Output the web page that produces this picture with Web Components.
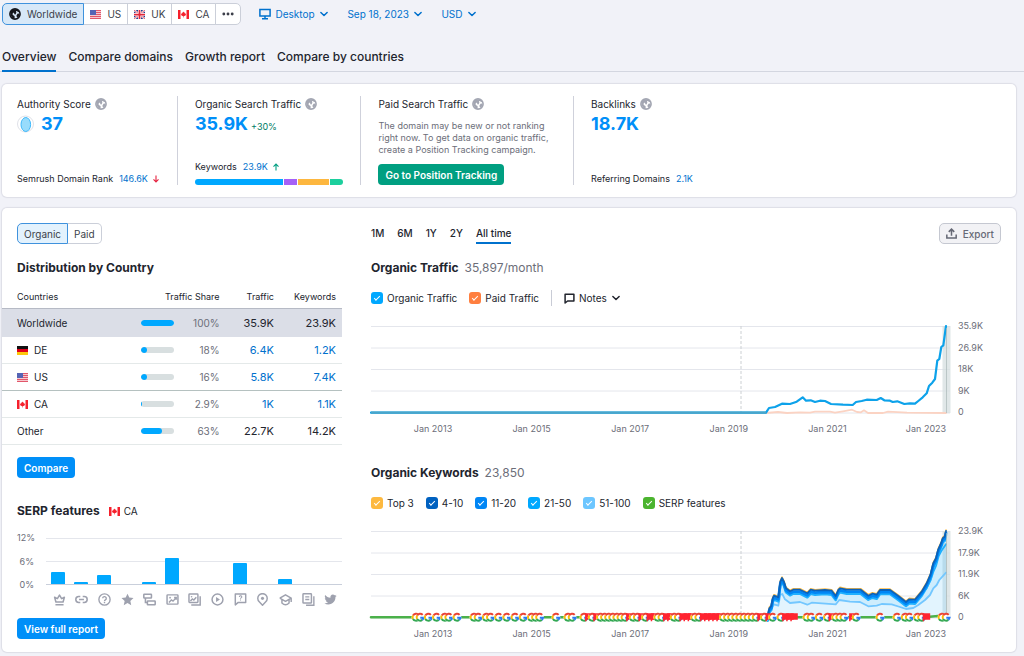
<!DOCTYPE html>
<html lang="en">
<head>
<meta charset="utf-8">
<meta name="viewport" content="width=device-width, initial-scale=1">
<title>Domain Overview</title>
<style>
    body {
        margin: 0;
        padding: 3px 8px 4px 2px;
        background-color: #f1f2f8;
        color: #22252e;
        font-family: Inter, "Liberation Sans", sans-serif;
        font-size: 10px;
        line-height: 16px;
        --blue: #0071cd;
        --muted: #6c6e79;
        --line: #e4e6ec;
    }
</style>
</head>
<body>
<report-toolbar></report-toolbar>
<report-tabs></report-tabs>

<summary-panel>
    <metric-card title="Authority Score">
        <authority-score slot="value">37</authority-score>
        <stat-line slot="footer" label="Semrush Domain Rank" value="146.6K" trend="down"></stat-line>
    </metric-card>
    <metric-card title="Organic Search Traffic">
        <big-value slot="value" delta="+30%">35.9K</big-value>
        <stat-line slot="footer" label="Keywords" value="23.9K" trend="up"></stat-line>
        <share-bar slot="footer"></share-bar>
    </metric-card>
    <metric-card title="Paid Search Traffic">
        <hint-text slot="value">The domain may be new or not ranking right now. To get data on organic traffic, create a Position Tracking campaign.</hint-text>
        <action-button slot="footer" color="#009f81">Go to Position Tracking</action-button>
    </metric-card>
    <metric-card title="Backlinks">
        <big-value slot="value">18.7K</big-value>
        <stat-line slot="footer" label="Referring Domains" value="2.1K"></stat-line>
    </metric-card>
</summary-panel>

<report-panel>
    <country-report slot="left"></country-report>
    <serp-features slot="left"></serp-features>
    <range-bar slot="right"></range-bar>
    <trend-chart slot="right" kind="traffic" title="Organic Traffic" total="35,897/month">
        <legend-toggle color="#00a8ff">Organic Traffic</legend-toggle>
        <legend-toggle color="#ff7f3f">Paid Traffic</legend-toggle>
        <notes-menu></notes-menu>
    </trend-chart>
    <trend-chart slot="right" kind="keywords" title="Organic Keywords" total="23,850">
        <legend-toggle color="#fdb940">Top 3</legend-toggle>
        <legend-toggle color="#0061c0">4-10</legend-toggle>
        <legend-toggle color="#0086f5">11-20</legend-toggle>
        <legend-toggle color="#00a8ff">21-50</legend-toggle>
        <legend-toggle color="#6cc6ff">51-100</legend-toggle>
        <legend-toggle color="#4bb42f">SERP features</legend-toggle>
    </trend-chart>
</report-panel>

<script>
const ICONS = {
    globe: '<circle cx="8" cy="8" r="6.8" fill="none" stroke="currentColor" stroke-width="2.1"/><path fill="currentColor" d="M2 5 5 1.800l6-.3L14 5l-2.200.2-1-1.200-1.600.4.6 1.800-1.200 2.600-1.400-.4L6.600 6 4.800 7.200 5 9.200l2.400 1.600.2 3.400L4 13 1.800 9zM10 9.600l1.800-2.400 2.600.4-.8 3.400-2.400 2-1-1.200z"/>',
    monitor: '<path fill="none" stroke="currentColor" stroke-width="2" d="M1.2 2h13.6v8.6H1.2zM8 10.6V14M4 14.4h8"/>',
    chevron: '<path fill="none" stroke="currentColor" stroke-width="2.4" stroke-linecap="round" stroke-linejoin="round" d="m3 5.5 5 5 5-5"/>',
    dots: '<g fill="currentColor"><circle cx="2.4" cy="8" r="1.9"/><circle cx="8" cy="8" r="1.9"/><circle cx="13.6" cy="8" r="1.9"/></g>',
    up: '<path fill="none" stroke="currentColor" stroke-width="2.2" d="M8 15V2.5M3 7.2l5-5 5 5"/>',
    down: '<path fill="none" stroke="currentColor" stroke-width="2.2" d="M8 1v12.5M3 8.8l5 5 5-5"/>',
    note: '<path fill="none" stroke="currentColor" stroke-width="2.2" stroke-linejoin="round" d="M1.6 1.8h12.8v9.8H5.2l-3.6 3z"/>',
    export: '<path fill="none" stroke="currentColor" stroke-width="2.2" d="M1.2 9.6v4.8h13.6V9.6M8 11.4V2M4 5.6l4-4 4 4"/>',
    crown: '<path fill="none" stroke="currentColor" stroke-width="1.9" stroke-linejoin="round" d="M3.6 11 2 5.2l3.4 1.7L8 2.6l2.6 4.3L14 5.2 12.4 11zM3 14.4h10"/>',
    link: '<path fill="none" stroke="currentColor" stroke-width="1.9" d="M6.5 4.4H4.6a3.6 3.6 0 0 0 0 7.2h1.9M9.5 4.4h1.9a3.6 3.6 0 0 1 0 7.2H9.5M5 8h6"/>',
    question: '<circle cx="8" cy="8" r="6.9" fill="none" stroke="currentColor" stroke-width="1.7"/><path fill="none" stroke="currentColor" stroke-width="1.7" d="M5.8 6.6a2.2 2.1 0 1 1 3.3 1.8c-.8.5-1.1.7-1.1 1.6M8 11v1.6"/>',
    star: '<path fill="currentColor" d="m8 .8 2.2 4.8 5.2.6-3.9 3.5 1.1 5.3L8 12.4 3.4 15l1.1-5.3L.6 6.2l5.2-.6z"/>',
    sitelinks: '<g fill="none" stroke="currentColor" stroke-width="1.9"><rect x="1" y="1.6" width="9.4" height="4.6" rx=".6"/><rect x="5.4" y="9.8" width="9.6" height="4.6" rx=".6"/><path d="M3 6.2v5.6h2.4"/></g>',
    image: '<rect x="1.3" y="2.3" width="13.4" height="11.4" rx=".8" fill="none" stroke="currentColor" stroke-width="1.8"/><path fill="none" stroke="currentColor" stroke-width="1.7" d="m3.6 11.6 3-3 2 1.4 3.8-4.2M10 5.6h2.6v2.6"/><circle cx="5" cy="5.8" r="1.1" fill="currentColor"/>',
    images: '<rect x="1.2" y="1.3" width="11" height="10.4" rx=".8" fill="none" stroke="currentColor" stroke-width="1.8"/><path fill="none" stroke="currentColor" stroke-width="1.8" d="M15 4v10.8H4M3 9.8l2.4-2.4 1.8 1.2 3-3.4"/><circle cx="4.4" cy="4.6" r="1" fill="currentColor"/>',
    video: '<circle cx="8" cy="8" r="6.7" fill="none" stroke="currentColor" stroke-width="1.8"/><path fill="currentColor" d="M6.2 4.8 11 8l-4.8 3.2z"/>',
    faq: '<path fill="none" stroke="currentColor" stroke-width="1.8" stroke-linejoin="round" d="M1.6 1.2h12.8v10.4H5.2l-3.6 3z"/><path fill="none" stroke="currentColor" stroke-width="1.3" d="M6.6 4.8a1.5 1.4 0 1 1 2.2 1.2c-.6.4-.8.5-.8 1.1M8 8v1.3"/>',
    pin: '<path fill="none" stroke="currentColor" stroke-width="1.8" stroke-linejoin="round" d="M8 15 4 10.8a5.8 5.8 0 1 1 8 0z"/><circle cx="8" cy="6.6" r="1.9" fill="currentColor"/>',
    scholar: '<path fill="none" stroke="currentColor" stroke-width="1.8" stroke-linejoin="round" d="m1 6.4 7-4.2 7 4.2v4.8M15 6.4 8 10.2 1 6.4M3.6 8v4.2c2.6 2.6 6.2 2.6 8.8 0V8"/>',
    news: '<rect x="1.2" y="1" width="10.4" height="11.4" rx=".8" fill="none" stroke="currentColor" stroke-width="1.8"/><path fill="none" stroke="currentColor" stroke-width="1.7" d="M4 4.8h5M4 8h5M14.6 4v11H5"/>',
    bird: '<path fill="currentColor" d="M15.6 3.4c-.6.3-1.1.4-1.8.5.6-.4 1.1-1 1.3-1.7-.6.4-1.2.6-1.9.7a3.1 3.1 0 0 0-5.3 2.8C5.3 5.6 3 4.4 1.4 2.4c-.8 1.5-.4 3.2 1 4.2-.5 0-1-.2-1.4-.4 0 1.500 1.100 2.800 2.500 3.100-.5.1-.9.1-1.400 0 .4 1.200 1.500 2.100 2.900 2.200A6.400 6.400 0 0 1 .4 12.800a9 9 0 0 0 4.800 1.400c5.900 0 9.100-5 8.900-9.300.6-.4 1.100-.9 1.500-1.500z"/>'
};

const FLAGS = {
    us: '<path fill="#f6c9cf" d="M0 0h22v18H0z"/><path stroke="#e2566a" stroke-width="2" d="M0 1h22M0 5h22M0 9h22M0 13h22M0 17h22"/><path fill="#5564b4" d="M0 0h12v10H0z"/>',
    uk: '<path fill="#26408f" d="M0 0h22v18H0z"/><path stroke="#fff" stroke-width="4" d="m0 0 22 18M22 0 0 18"/><path stroke="#e0283c" stroke-width="1.5" d="m0 0 22 18M22 0 0 18"/><path stroke="#fff" stroke-width="6" d="M11 0v18M0 9h22"/><path stroke="#e0283c" stroke-width="3.5" d="M11 0v18M0 9h22"/>',
    ca: '<path fill="#fff" d="M0 0h22v18H0z"/><path fill="#f5202c" d="M0 0h5v18H0zM17 0h5v18h-5zM11 3l1.5 2.5 1.5-.5-.3 2.6L16 7l-.5 2 .6.8L13 12.200l-1.500.2V15h-1v-2.600L9 12.200 5.900 9.800l.6-.8L6 7l2.300.6L8 5l1.500.5z"/>',
    de: '<path fill="#111" d="M0 0h22v6H0z"/><path fill="#e2001a" d="M0 6h22v6H0z"/><path fill="#fdc70c" d="M0 12h22v6H0z"/>'
};

class UiIcon extends HTMLElement {
    connectedCallback() {
        const size = this.getAttribute("size") || 11;
        this.attachShadow({mode: "open"}).innerHTML = `
          <style>
            :host { display: inline-flex; flex: none; }
            svg { display: block; }
          </style>
          <svg width="${size}" height="${size}" viewBox="0 0 16 16" aria-hidden="true">${ICONS[this.getAttribute("name")]}</svg>`;
    }
}

class FlagIcon extends HTMLElement {
    connectedCallback() {
        this.attachShadow({mode: "open"}).innerHTML = `
          <style>
            :host { display: inline-flex; flex: none; }
            svg { display: block; }
          </style>
          <svg width="11" height="9" viewBox="0 0 22 18" aria-hidden="true">${FLAGS[this.getAttribute("code")]}</svg>`;
    }
}

class ReportToolbar extends HTMLElement {
    connectedCallback() {
        this.attachShadow({mode: "open"}).innerHTML = `
          <style>
            :host {
              display: flex;
              align-items: center;
              gap: 18px;
            }
            .regions {
              display: flex;
            }
            button {
              display: flex;
              align-items: center;
              gap: 6px;
              height: 22px;
              margin: 0 0 0 -1px;
              padding: 0 6px;
              font: inherit;
              color: #3c3f4a;
              background-color: #fff;
              border: 1px solid #cbcfd9;
              cursor: pointer;
            }
            button:first-child {
              margin-left: 0;
              border-radius: 5px 0 0 5px;
            }
            button:last-child {
              border-radius: 0 5px 5px 0;
            }
            button[aria-pressed="true"] {
              position: relative;
              background-color: #d7e8f8;
              border-color: #3f92dd;
            }
            button[aria-pressed="true"] ui-icon {
              color: #14161c;
            }
            label {
              display: flex;
              align-items: center;
              gap: 4px;
              color: var(--blue);
            }
            select {
              appearance: none;
              margin: 0;
              padding: 0;
              border: 0;
              background: none;
              font: inherit;
              color: inherit;
              cursor: pointer;
            }
          </style>
          <div class="regions">
            <button aria-pressed="true"><ui-icon name="globe" size="12"></ui-icon>Worldwide</button>
            <button aria-pressed="false"><flag-icon code="us"></flag-icon>US</button>
            <button aria-pressed="false"><flag-icon code="uk"></flag-icon>UK</button>
            <button aria-pressed="false"><flag-icon code="ca"></flag-icon>CA</button>
            <button aria-pressed="false" aria-label="More regions"><ui-icon name="dots" size="12"></ui-icon></button>
          </div>
          <label><ui-icon name="monitor" size="12"></ui-icon><select aria-label="Device"><option>Desktop</option></select><ui-icon name="chevron" size="10"></ui-icon></label>
          <label><select aria-label="Date"><option>Sep 18, 2023</option></select><ui-icon name="chevron" size="10"></ui-icon></label>
          <label><select aria-label="Currency"><option>USD</option></select><ui-icon name="chevron" size="10"></ui-icon></label>`;
    }
}

class ReportTabs extends HTMLElement {
    connectedCallback() {
        this.attachShadow({mode: "open"}).innerHTML = `
          <style>
            :host {
              display: block;
              margin: 20px -8px 12px -2px;
              padding-left: 2px;
              border-bottom: 1px solid #d3d6e0;
            }
            nav {
              display: flex;
              gap: 12px;
            }
            a {
              height: 25px;
              margin-bottom: -1px;
              border-bottom: 2px solid transparent;
              font-size: 12px;
              line-height: 24px;
              font-weight: 500;
              color: #22252e;
              text-decoration: none;
            }
            a[aria-current] {
              border-bottom-color: var(--blue);
            }
          </style>
          <nav>
            <a href="#overview" aria-current="page">Overview</a>
            <a href="#domains">Compare domains</a>
            <a href="#growth">Growth report</a>
            <a href="#countries">Compare by countries</a>
          </nav>`;
    }
}

class SummaryPanel extends HTMLElement {
    connectedCallback() {
        this.attachShadow({mode: "open"}).innerHTML = `
          <style>
            :host {
              display: grid;
              grid-template-columns: 159fr 184fr 213fr 443fr;
              margin-bottom: 11px;
              padding: 12px 0 12px 15px;
              background-color: #fff;
              border-radius: 5px;
              box-shadow: 0 0 1px 1px rgba(25, 27, 60, 0.09);
            }
          </style>
          <slot></slot>`;
    }
}

class MetricCard extends HTMLElement {
    connectedCallback() {
        this.attachShadow({mode: "open"}).innerHTML = `
          <style>
            :host {
              display: flex;
              flex-direction: column;
              min-height: 89px;
              padding: 0 17px;
              border-right: 1px solid #cfd1db;
            }
            :host(:first-child) {
              padding-left: 0;
            }
            :host(:last-child) {
              border-right: 0;
            }
            h3 {
              display: flex;
              align-items: center;
              gap: 4px;
              margin: 0;
              font: inherit;
            }
            ui-icon {
              color: #a3a6b2;
            }
            .footer {
              display: flex;
              flex-direction: column;
              align-items: flex-start;
              gap: 6px;
              margin-top: auto;
            }
          </style>
          <h3>${this.getAttribute("title")}<ui-icon name="globe" size="12"></ui-icon></h3>
          <slot name="value"></slot>
          <div class="footer"><slot name="footer"></slot></div>`;
    }
}

class BigValue extends HTMLElement {
    connectedCallback() {
        this.attachShadow({mode: "open"}).innerHTML = `
          <style>
            :host {
              display: flex;
              align-items: baseline;
              gap: 3px;
              font-size: 18px;
              line-height: 24px;
              font-weight: 700;
              color: #008ff8;
            }
            small {
              font-size: 9px;
              font-weight: 400;
              color: #007c65;
            }
          </style>
          <slot></slot><small>${this.getAttribute("delta") || ""}</small>`;
    }
}

class AuthorityScore extends HTMLElement {
    connectedCallback() {
        this.attachShadow({mode: "open"}).innerHTML = `
          <style>
            :host {
              display: flex;
              align-items: center;
              gap: 6px;
            }
          </style>
          <svg width="18" height="18" viewBox="0 0 18 18" aria-hidden="true">
            <circle cx="8.5" cy="9" r="8" fill="#fff" stroke="#dfe1e8"/>
            <ellipse cx="8.800" cy="9.500" rx="4.800" ry="7" fill="#98dcfc" stroke="#3db8fb"/>
          </svg>
          <big-value><slot></slot></big-value>`;
    }
}

class StatLine extends HTMLElement {
    connectedCallback() {
        const trend = this.getAttribute("trend");
        this.attachShadow({mode: "open"}).innerHTML = `
          <style>
            :host {
              display: flex;
              align-items: center;
              gap: 6px;
              font-size: 9px;
              line-height: 12px;
              white-space: nowrap;
            }
            span {
              display: flex;
              align-items: center;
              gap: 4px;
            }
            a {
              color: var(--blue);
              text-decoration: none;
            }
            .up { color: #009f81; }
            .down { color: #e5213f; }
          </style>
          ${this.getAttribute("label")}
          <span>
            <a href="#details">${this.getAttribute("value")}</a>
            ${trend ? `<ui-icon class="${trend}" name="${trend}" size="8"></ui-icon>` : ""}
          </span>`;
    }
}

class ShareBar extends HTMLElement {
    connectedCallback() {
        this.attachShadow({mode: "open"}).innerHTML = `
          <style>
            :host {
              display: flex;
              align-self: stretch;
              gap: 1px;
              height: 6px;
              overflow: hidden;
              border-radius: 3px;
            }
          </style>
          <i style="flex: 88; background: #00a8ff"></i>
          <i style="flex: 13; background: #a561f7"></i>
          <i style="flex: 31; background: #fdb73f"></i>
          <i style="flex: 13; background: #1ccf9d"></i>`;
    }
}

class HintText extends HTMLElement {
    connectedCallback() {
        this.attachShadow({mode: "open"}).innerHTML = `
          <style>
            :host {
              display: block;
              max-width: 175px;
              margin-top: 8px;
              font-size: 9px;
              line-height: 12px;
              color: var(--muted);
            }
          </style>
          <slot></slot>`;
    }
}

class ActionButton extends HTMLElement {
    connectedCallback() {
        this.attachShadow({mode: "open"}).innerHTML = `
          <style>
            :host { display: inline-flex; }
            button {
              height: 21px;
              padding: 0 7px;
              border: 0;
              border-radius: 4px;
              background-color: ${this.getAttribute("color") || "#008ff8"};
              color: #fff;
              font: inherit;
              font-weight: 600;
              white-space: nowrap;
              cursor: pointer;
            }
          </style>
          <button><slot></slot></button>`;
    }
}

class ReportPanel extends HTMLElement {
    connectedCallback() {
        this.attachShadow({mode: "open"}).innerHTML = `
          <style>
            :host {
              display: grid;
              grid-template-columns: 340fr 630fr;
              gap: 29px;
              padding: 15px 15px 12px 0;
              background-color: #fff;
              border-radius: 5px;
              box-shadow: 0 0 1px 1px rgba(25, 27, 60, 0.09);
            }
            div {
              min-width: 0;
            }
          </style>
          <div><slot name="left"></slot></div>
          <div><slot name="right"></slot></div>`;
    }
}

class CountryReport extends HTMLElement {
    get rows() {
        return [
            {name: "Worldwide", share: 100, label: "100%", traffic: "35.9K", keywords: "23.9K"},
            {name: "DE", flag: "de", share: 18, label: "18%", traffic: "6.4K", keywords: "1.2K"},
            {name: "US", flag: "us", share: 16, label: "16%", traffic: "5.8K", keywords: "7.4K"},
            {name: "CA", flag: "ca", share: 3, label: "2.9%", traffic: "1K", keywords: "1.1K"},
            {name: "Other", share: 63, label: "63%", traffic: "22.7K", keywords: "14.2K"}
        ];
    }

    connectedCallback() {
        this.attachShadow({mode: "open"}).innerHTML = `
          <style>
            :host {
              display: block;
            }
            .switch {
              display: flex;
              margin-left: 15px;
            }
            .switch button {
              height: 21px;
              padding: 0 6px;
              font: inherit;
              color: #3c3f4a;
              background-color: #fff;
              border: 1px solid #cbcfd9;
              border-left: 0;
              border-radius: 0 5px 5px 0;
              cursor: pointer;
            }
            .switch button[aria-pressed="true"] {
              background-color: #e3f2fd;
              border: 1px solid #3f92dd;
              border-radius: 5px 0 0 5px;
            }
            h2 {
              margin: 15px 0 9px 15px;
              font-size: 12px;
              line-height: 18px;
              font-weight: 700;
            }
            table {
              width: 100%;
              border-spacing: 0;
              table-layout: fixed;
              text-align: right;
            }
            th {
              height: 22px;
              padding: 0;
              border-bottom: 1px solid #b6bac5;
              font-size: 9px;
              line-height: 12px;
              font-weight: 400;
            }
            td {
              height: 26px;
              padding: 0;
              border-bottom: 1px solid #e4e9e9;
            }
            .country { width: 41%; padding-left: 15px; text-align: left; box-sizing: border-box; }
            .share { width: 23%; }
            .traffic { width: 16%; }
            .keywords { padding-right: 6px; }
            tr.selected td {
              height: 27px;
              background-color: #dbdee7;
              border-bottom-color: #dbdee7;
            }
            tr.mark td {
              border-bottom-color: #b5c1c0;
            }
            td.traffic, td.keywords {
              font-size: 11px;
            }
            .name, .share-cell {
              display: flex;
              align-items: center;
              gap: 6px;
            }
            .share-cell {
              justify-content: space-between;
              color: var(--muted);
            }
            .bar {
              width: 33px;
              height: 6px;
              overflow: hidden;
              border-radius: 3px;
              background-color: #d8dfe0;
            }
            .bar i {
              display: block;
              height: 6px;
              border-radius: 3px;
              background-color: #00a8ff;
            }
            a {
              color: var(--blue);
              text-decoration: none;
            }
            action-button {
              margin: 12px 0 0 15px;
            }
          </style>
          <div class="switch">
            <button aria-pressed="true">Organic</button>
            <button aria-pressed="false">Paid</button>
          </div>
          <h2>Distribution by Country</h2>
          <table>
            <thead>
              <tr><th class="country">Countries</th><th class="share">Traffic Share</th><th class="traffic">Traffic</th><th class="keywords">Keywords</th></tr>
            </thead>
            <tbody>${this.rows.map(row => this._renderRow(row)).join("")}</tbody>
          </table>
          <action-button>Compare</action-button>`;
    }

    _renderRow(row) {
        const cell = text => row.flag ? `<a href="#${row.flag}">${text}</a>` : text;
        const rowClass = row.name === "Worldwide" ? "selected" : row.name === "US" ? "mark" : "";
        return `
          <tr class="${rowClass}">
            <td class="country"><div class="name">${row.flag ? `<flag-icon code="${row.flag}"></flag-icon>` : ""}${row.name}</div></td>
            <td class="share"><div class="share-cell"><div class="bar"><i style="width: ${row.share}%"></i></div>${row.label}</div></td>
            <td class="traffic">${cell(row.traffic)}</td>
            <td class="keywords">${cell(row.keywords)}</td>
          </tr>`;
    }
}

class SerpFeatures extends HTMLElement {
    get features() {
        // icon name, bar height in pixels
        return [
            ["crown", 12], ["link", 2], ["question", 9], ["star", 0], ["sitelinks", 2],
            ["image", 26], ["images", 0], ["video", 0], ["faq", 21], ["pin", 0],
            ["scholar", 5], ["news", 0], ["bird", 0]
        ];
    }

    connectedCallback() {
        this.attachShadow({mode: "open"}).innerHTML = `
          <style>
            :host {
              display: block;
              padding-left: 15px;
            }
            header {
              display: flex;
              align-items: center;
              gap: 4px;
              margin: 24px 0 18px;
              line-height: 18px;
            }
            h2 {
              margin: 0 5px 0 0;
              font-size: 12px;
              line-height: 18px;
              font-weight: 700;
            }
            .chart {
              display: grid;
              grid-template-columns: 17px 1fr;
              column-gap: 12px;
            }
            .scale {
              display: flex;
              flex-direction: column;
              justify-content: space-between;
              margin: -6px 0;
              font-size: 9px;
              line-height: 12px;
              text-align: right;
              color: var(--muted);
            }
            .bars, .icons {
              display: grid;
              grid-template-columns: repeat(13, 1fr);
            }
            .bars {
              height: 46px;
              align-items: end;
              justify-items: center;
              padding-left: 1px;
              border-bottom: 1px solid #c9cfdb;
              background: linear-gradient(var(--line) 1px, transparent 1px) 0 0 / 100% 23px;
            }
            .bars i {
              width: 14px;
              border-radius: 1px 1px 0 0;
              background-color: #00a8ff;
            }
            .icons {
              grid-column: 2;
              justify-items: center;
              margin: 8px 0 12px;
              padding-left: 2px;
              color: #9ea1ae;
            }
          </style>
          <header><h2>SERP features</h2><flag-icon code="ca"></flag-icon>CA</header>
          <div class="chart">
            <div class="scale"><span>12%</span><span>6%</span><span>0%</span></div>
            <div class="bars">${this.features.map(([, height]) => `<i style="height: ${height}px"></i>`).join("")}</div>
            <div class="icons">${this.features.map(([name]) => `<ui-icon name="${name}" size="13"></ui-icon>`).join("")}</div>
          </div>
          <action-button>View full report</action-button>`;
    }
}

class RangeBar extends HTMLElement {
    connectedCallback() {
        this.attachShadow({mode: "open"}).innerHTML = `
          <style>
            :host {
              display: flex;
              justify-content: space-between;
              height: 21px;
            }
            nav {
              display: flex;
              gap: 13px;
            }
            a {
              box-sizing: border-box;
              height: 21px;
              border-bottom: 2px solid transparent;
              line-height: 20px;
              font-weight: 500;
              color: #22252e;
              text-decoration: none;
            }
            a[aria-current] {
              border-bottom-color: var(--blue);
            }
            button {
              display: flex;
              align-items: center;
              gap: 6px;
              padding: 0 6px;
              font: inherit;
              font-weight: 500;
              color: #666975;
              background-color: #f2f2f5;
              border: 1px solid #c5c8d1;
              border-radius: 5px;
              cursor: pointer;
            }
          </style>
          <nav>
            <a href="#1m">1M</a>
            <a href="#6m">6M</a>
            <a href="#1y">1Y</a>
            <a href="#2y">2Y</a>
            <a href="#all" aria-current="true">All time</a>
          </nav>
          <button><ui-icon name="export" size="11"></ui-icon>Export</button>`;
    }
}

class LegendToggle extends HTMLElement {
    connectedCallback() {
        this.attachShadow({mode: "open"}).innerHTML = `
          <style>
            :host { display: inline-flex; }
            label {
              display: flex;
              align-items: center;
              gap: 4px;
            }
            input {
              appearance: none;
              display: grid;
              place-content: center;
              width: 12px;
              height: 12px;
              margin: 0;
              border-radius: 3px;
              background-color: #c4c7cf;
            }
            input:checked {
              background-color: ${this.getAttribute("color")};
            }
            input:checked::after {
              content: "";
              width: 5px;
              height: 2px;
              margin-bottom: 2px;
              border: solid #fff;
              border-width: 0 0 1px 1px;
              transform: rotate(-45deg);
            }
          </style>
          <label><input type="checkbox" checked><slot></slot></label>`;
    }
}

class NotesMenu extends HTMLElement {
    connectedCallback() {
        this.attachShadow({mode: "open"}).innerHTML = `
          <style>
            :host {
              display: inline-flex;
              padding-left: 12px;
              border-left: 1px solid #c9ccd6;
            }
            button {
              display: flex;
              align-items: center;
              gap: 4px;
              padding: 0;
              border: 0;
              background: none;
              font: inherit;
              color: inherit;
              cursor: pointer;
            }
          </style>
          <button aria-haspopup="menu"><ui-icon name="note" size="11"></ui-icon>Notes<ui-icon name="chevron" size="10"></ui-icon></button>`;
    }
}

const TRAFFIC = "0,92.7 395,92.7 398,88 404,87 411,83.7 419,84 425.7,81.7 431.7,77.3 435,80.7 439.7,80.3 444,82 449,80.7 454,81 460,84 472,84.7 481.7,85 485,82 490.7,81 495.7,79.7 505.7,80 509.7,78 513.3,80.3 519,80.7 521.7,82 526.3,81.3 533.3,84 539,83.3 544,83.7 547.3,81 551.7,77.3 555.7,73.3 558,66 561.3,62.7 564,59 566.3,40.7 568.3,39 570.3,27 572.3,25.3 575,6";
const PAID = "395,93 407,92 416,93 429,92.3 439,92.7 444,91.7 459,91.7 464,92.7 472,91.3 481,89.7 486,92 490,92.3 493,90.3 497,93 512,93 517,91.7 536,92.7 575,93";
const KEYWORDS = "396.7,91.7 398.3,83.3 400.3,81 401.7,73.3 403,70.7 407.3,72.3 409.3,56.7 411,53 413,57 415,63.3 419,66.3 422.3,64.7 429,64.7 436.3,68.3 439.7,64.7 444,65.7 454,65 460.7,65.7 464.7,71 467.3,65 469,63.3 475.7,64.7 489.7,64.7 497.3,70.7 501.3,68.7 505.7,69.7 509,65 519,65 527.3,71 535,77 538.3,74.3 544,74.7 550.7,66.7 555.7,58.3 559.7,49 562.3,38.3 565,33.3 567.3,24.3 570.3,17.7 571.7,13.3 573.7,11.7 575,6";
const TOP_100 = "396.7,91.7 399,86.7 403,79.3 407.3,80.7 409.3,70 411.3,69 414,74.3 419,78 429,77 436.3,79.7 440.7,77.7 464.7,79.3 468.3,75 479,76.7 489,77 497.3,81.3 505.7,80.7 510.7,79 520.7,79.3 529,82 535,84 542.3,83 547.3,80 554,75 559,70 562.3,63.3 565.7,60 568.3,55 575,47.7";
const TOP_50 = "555,64 559.7,55 562.3,47 565,41 567.7,31 570.3,26 575,19.3";

// algorithm updates along the keyword axis: start x and one letter per month
const MARKERS = [
    [45, "GG-G-G-GG-G"], [103, "GG-GG-G-G-G-G-GGG"], [185, "G"], [197, "GG"],
    [213, "GFGFGGGGGGGFGGFGFFGGFFGGFFFGGFFFFFGGGGGGGGGFGFG"],
    [410, "GFFF"], [436, "GG-G-GFGGG-FG"], [509, "G"], [526, "G-GG-GGF"], [571, "GG"]
];

class TrendChart extends HTMLElement {
    connectedCallback() {
        const keywords = this.getAttribute("kind") === "keywords";
        const labels = keywords ? ["23.9K", "17.9K", "11.9K", "6K", "0"] : ["35.9K", "26.9K", "18K", "9K", "0"];
        const years = [2013, 2015, 2017, 2019, 2021, 2023];
        this.attachShadow({mode: "open"}).innerHTML = `
          <style>
            :host {
              display: block;
              margin-top: 15px;
            }
            :host([kind="keywords"]) {
              margin-top: 29px;
            }
            h2 {
              display: flex;
              gap: 6px;
              margin: 0 0 12px;
              font-size: 12px;
              line-height: 18px;
              font-weight: 700;
            }
            h2 span {
              font-weight: 400;
              color: var(--muted);
            }
            .legend {
              display: flex;
              flex-wrap: wrap;
              gap: 12px;
              min-height: 18px;
              align-items: center;
              margin-bottom: 13px;
            }
            svg {
              display: block;
              width: 100%;
              overflow: visible;
            }
            text {
              font-size: 9px;
              fill: var(--muted);
            }
            polyline {
              fill: none;
              stroke-linejoin: round;
              stroke-linecap: round;
            }
          </style>
          <h2>${this.getAttribute("title")} <span>${this.getAttribute("total")}</span></h2>
          <div class="legend"><slot></slot></div>
          <svg viewBox="0 0 630 115" role="img" aria-label="${this.getAttribute("title")}">
            <defs>
              <g id="G">
                <circle r="4.4" fill="#fff"/>
                <g fill="none" stroke-width="2">
                  <path stroke="#ea4335" d="M2.6-2.4A3.5 3.5 0 0 0-3-1.7"/>
                  <path stroke="#fbbc05" d="M-3-1.7A3.5 3.5 0 0 0-3 1.7"/>
                  <path stroke="#34a853" d="M-3 1.7A3.5 3.5 0 0 0 2.2 2.6"/>
                  <path stroke="#2b7bf3" d="M2.2 2.6A3.5 3.5 0 0 0 3.5.4H.2"/>
                </g>
              </g>
              <path id="F" fill="#ff2430" d="M-3-4h7.5v6.5h-6V4H-3z"/>
            </defs>
            <path stroke="#e4e6ec" stroke-width="1" d="M0 6.5h579M0 28h579M0 49.5h579M0 71h579M0 93h579"/>
            <path fill="#d6dfe0" fill-opacity=".75" d="M571.5 6h8v87h-8z"/>
            <path stroke="#ccd0d3" stroke-dasharray="3 2" d="M370 6v87"/>
            ${keywords ? this._keywordLines() : this._trafficLines()}
            <path stroke="#a9b8b8" stroke-opacity=".7" d="M575.5 8v85"/>
            ${keywords ? this._markers() : ""}
            ${labels.map((label, i) => `<text x="587" y="${[9, 31, 52, 74, 95][i]}">${label}</text>`).join("")}
            ${years.map((year, i) => `<text x="${62 + i * 98.6}" y="112" text-anchor="middle">Jan ${year}</text>`).join("")}
          </svg>`;
    }

    _trafficLines() {
        return `
            <polyline stroke="#fbd3c3" stroke-width="1.8" points="${PAID}"/>
            <polyline stroke="#0da2ea" stroke-width="2.2" points="${TRAFFIC}"/>
            <path stroke="#4aa5c9" stroke-width="2.2" d="M0 92.7h395"/>`;
    }

    _keywordLines() {
        return `
            <polygon fill="#c9ebfd" fill-opacity=".9" points="${KEYWORDS} 575,92"/>
            <polygon fill="#e2f4fe" points="${TOP_100} 575,92"/>
            <path fill="#93bdd2" fill-opacity=".35" d="M571.5 18h4v75h-4z"/>
            <polyline stroke="#73c7ff" stroke-width="1.8" points="${TOP_100}"/>
            <polyline stroke="#fdb940" stroke-width="1.5" transform="translate(0 -1)" points="${KEYWORDS}"/>
            <polyline stroke="#1eb0ff" stroke-width="2.5" transform="translate(0 4)" points="${KEYWORDS}"/>
            <polyline stroke="#1eb0ff" stroke-width="1.8" points="${TOP_50}"/>
            <polyline stroke="#0086f5" stroke-width="2.8" transform="translate(0 2)" points="${KEYWORDS}"/>
            <polyline stroke="#0b62bb" stroke-width="1.8" points="${KEYWORDS}"/>`;
    }

    _markers() {
        const marks = MARKERS.map(([start, months]) => [...months].map((type, i) =>
            type === "-" ? "" : `<use href="#${type}" x="${start + i * 4.1}" y="92.3"/>`).join(""));
        return `<polyline stroke="#4bb14a" stroke-width="2.6" points="0,92.3 553,92.3 567,91 575,92.3"/>${marks.join("")}`;
    }
}

window.customElements.define("ui-icon", UiIcon);
window.customElements.define("flag-icon", FlagIcon);
window.customElements.define("report-toolbar", ReportToolbar);
window.customElements.define("report-tabs", ReportTabs);
window.customElements.define("summary-panel", SummaryPanel);
window.customElements.define("metric-card", MetricCard);
window.customElements.define("big-value", BigValue);
window.customElements.define("authority-score", AuthorityScore);
window.customElements.define("stat-line", StatLine);
window.customElements.define("share-bar", ShareBar);
window.customElements.define("hint-text", HintText);
window.customElements.define("action-button", ActionButton);
window.customElements.define("report-panel", ReportPanel);
window.customElements.define("country-report", CountryReport);
window.customElements.define("serp-features", SerpFeatures);
window.customElements.define("range-bar", RangeBar);
window.customElements.define("legend-toggle", LegendToggle);
window.customElements.define("notes-menu", NotesMenu);
window.customElements.define("trend-chart", TrendChart);
</script>
</body>
</html>
